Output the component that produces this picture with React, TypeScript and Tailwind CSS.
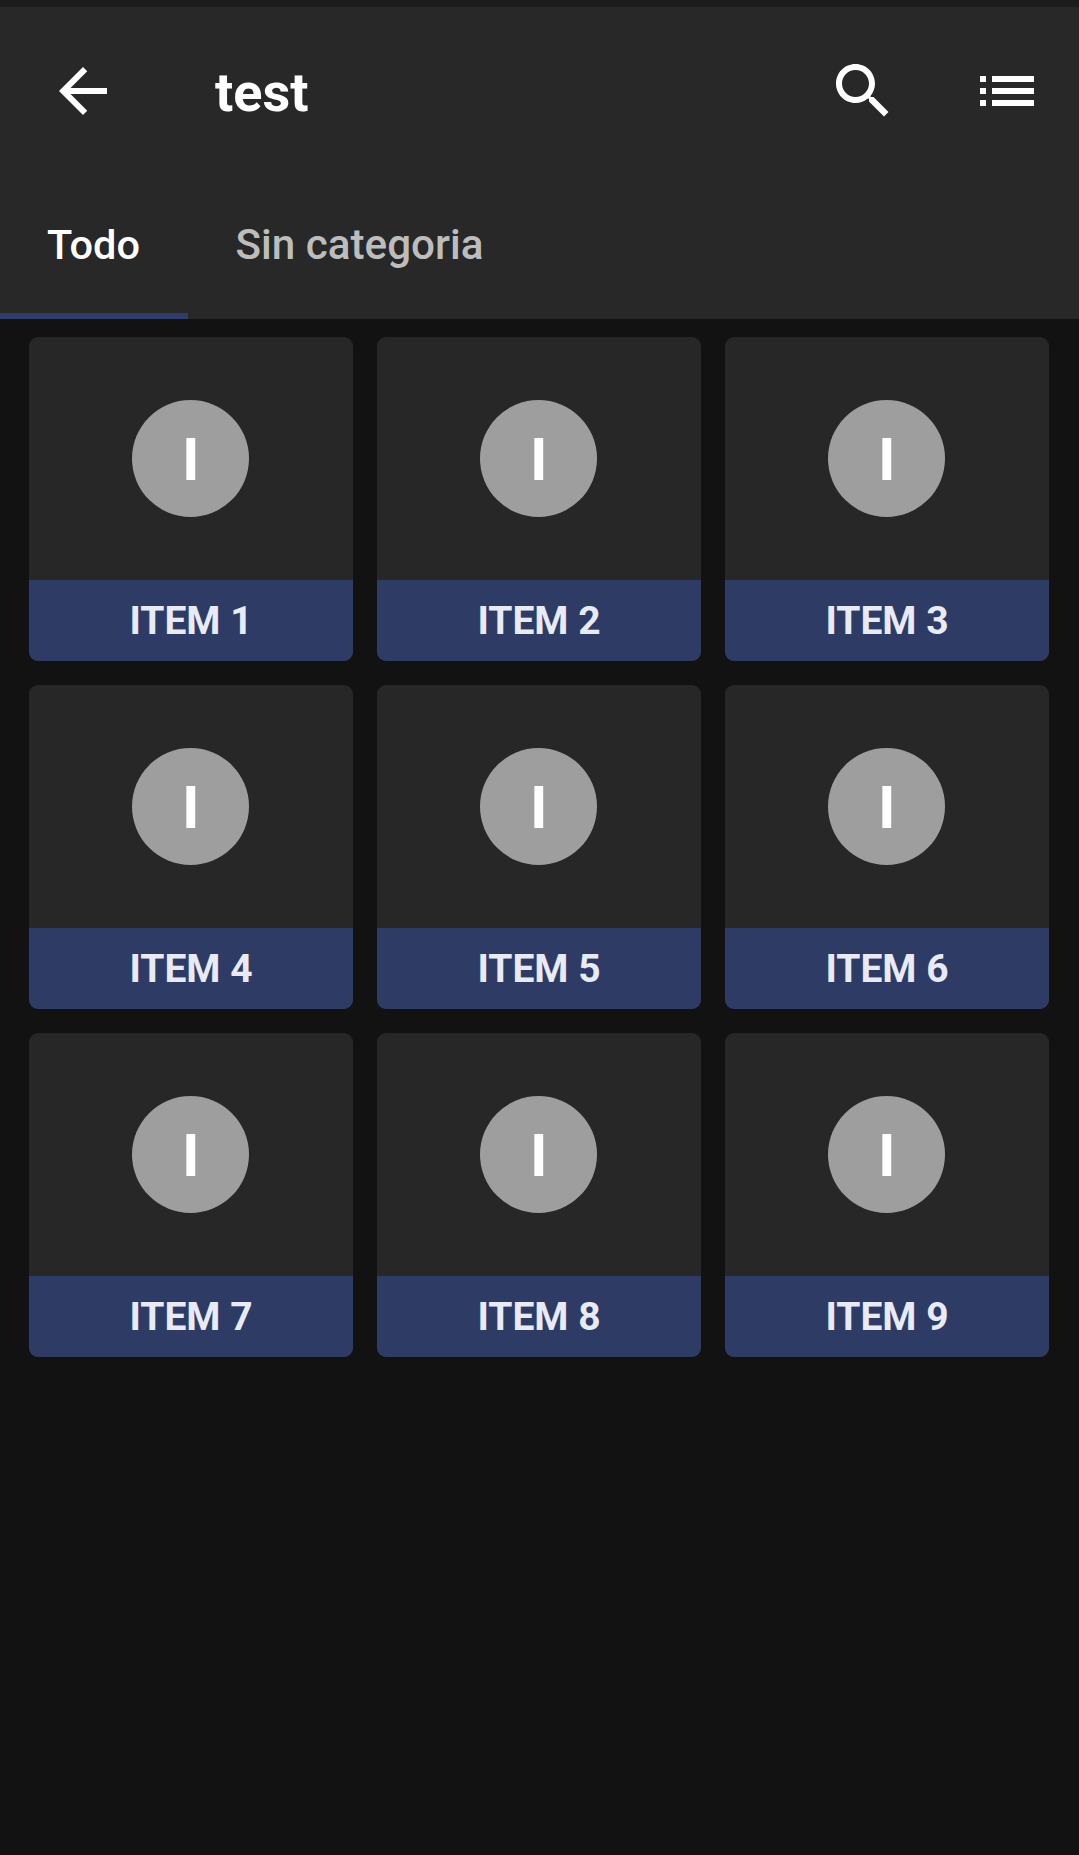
const items = ["ITEM 1", "ITEM 2", "ITEM 3", "ITEM 4", "ITEM 5", "ITEM 6", "ITEM 7", "ITEM 8", "ITEM 9"]

function Icon({ d }: { d: string }) {
  return (
    <svg viewBox="0 0 24 24" className="w-[72px] h-[72px] shrink-0" fill="#ffffff">
      <path d={d} />
    </svg>
  )
}

function Card({ label }: { label: string }) {
  return (
    <div className="flex flex-col h-[324px] rounded-[9px] overflow-hidden bg-[#272727]">
      <div className="flex-1 flex items-center justify-center pr-[0.5px]">
        <div className="w-[117px] h-[117px] rounded-full bg-[#9e9e9e] flex items-center justify-center pt-[2px] text-white text-[60px] font-bold leading-none">
          I
        </div>
      </div>
      <div className="h-[81px] pt-[2px] bg-[#2e3b65] flex items-center justify-center text-[#e8eaf6] text-[39px] font-bold">
        {label}
      </div>
    </div>
  )
}

export default function App() {
  return (
    <div className="min-h-[1855px] bg-[#121212] font-['Roboto',sans-serif]">
      <header className="bg-[#282828]">
        <div className="h-[7px] bg-[#1c1c1c]" />
        <div className="flex items-center h-[168px] pl-[47px] pr-[36px]">
          <Icon d="M20 11H7.83l5.59-5.59L12 4l-8 8 8 8 1.41-1.41L7.83 13H20v-2z" />
          <h1 className="ml-[96px] flex-1 pt-[2px] text-white text-[54px] font-bold">test</h1>
          <Icon d="M15.5 14h-.79l-.28-.27C15.41 12.59 16 11.11 16 9.5 16 5.91 13.09 3 9.5 3S3 5.91 3 9.5 5.91 16 9.5 16c1.61 0 3.09-.59 4.23-1.57l.27.28v.79l5 4.99L20.49 19l-4.99-5zm-6 0C7.01 14 5 11.99 5 9.5S7.01 5 9.5 5 14 7.01 14 9.5 11.99 14 9.5 14z" />
          <div className="ml-[72px]">
            <Icon d="M3 13h2v-2H3v2zm0 4h2v-2H3v2zm0-8h2V7H3v2zm4 4h14v-2H7v2zm0 4h14v-2H7v2zM7 7v2h14V7H7z" />
          </div>
        </div>
        <div className="flex h-[144px] font-medium">
          <div className="flex items-center w-[188px] pl-[47px] pt-[2px] text-[41.5px] text-white border-b-[6px] border-[#2e3d69]">Todo</div>
          <div className="flex items-center pl-[47.5px] pt-[1px] text-[42.2px] text-[#bdbdbd] pb-[6px]">Sin categoria</div>
        </div>
      </header>
      <main className="grid grid-cols-3 gap-[24px] pt-[18px] pl-[29px] pr-[30px]">
        {items.map((item) => (
          <Card key={item} label={item} />
        ))}
      </main>
    </div>
  )
}
